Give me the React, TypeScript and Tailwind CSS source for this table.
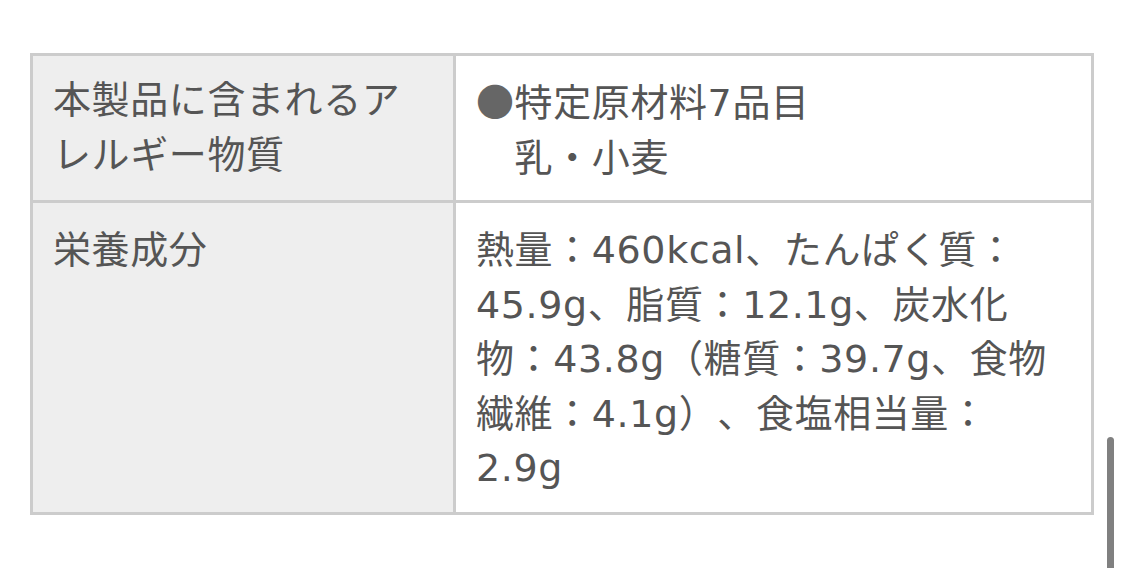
import React from 'react';

const font = {
  fontFamily: '"DejaVu Sans", "Noto Sans CJK JP", sans-serif',
};

export default function App() {
  return (
    <div className="relative w-[1125px] h-[568px] bg-white overflow-hidden" style={font}>
      <div className="pt-[53px] pl-[30px]">
        <div className="grid w-[1064px] grid-cols-[423px_638px] border-t-[3px] border-l-[3px] border-[#cccccc] text-[38px] leading-[54.5px] tracking-[0.6px] text-[#555555] [text-spacing-trim:space-all]">
          {/* Allergy row */}
          <div className="bg-[#eeeeee] border-r-[3px] border-b-[3px] border-[#cccccc] pt-[17px] pb-[15px] px-[20px]">
            本製品に含まれるア<br />レルギー物質
          </div>
          <div className="bg-white border-r-[3px] border-b-[3px] border-[#cccccc] pt-[17px] pb-[15px] px-[20px] whitespace-nowrap">
            <span className="text-[#666666] [font-family:'Noto_Sans_CJK_JP',sans-serif]">●</span>特定原材料7品目<br />
            {'\u3000'}乳・小麦
          </div>

          {/* Nutrition row */}
          <div className="bg-[#eeeeee] border-r-[3px] border-b-[3px] border-[#cccccc] pt-[20px] pb-[16px] px-[20px]">
            栄養成分
          </div>
          <div className="bg-white border-r-[3px] border-b-[3px] border-[#cccccc] pt-[20px] pb-[16px] px-[20px] whitespace-nowrap">
            熱量：460kcal、たんぱく質：<br />
            45.9g、脂質：12.1g、炭水化<br />
            物：43.8g（糖質：39.7g、食物<br />
            繊維：4.1g）、食塩相当量：<br />
            2.9g
          </div>
        </div>
      </div>

      {/* scroll indicator */}
      <div className="absolute left-[1107px] top-[437px] w-[7px] h-[140px] rounded-full bg-[#808080]" />
    </div>
  );
}
